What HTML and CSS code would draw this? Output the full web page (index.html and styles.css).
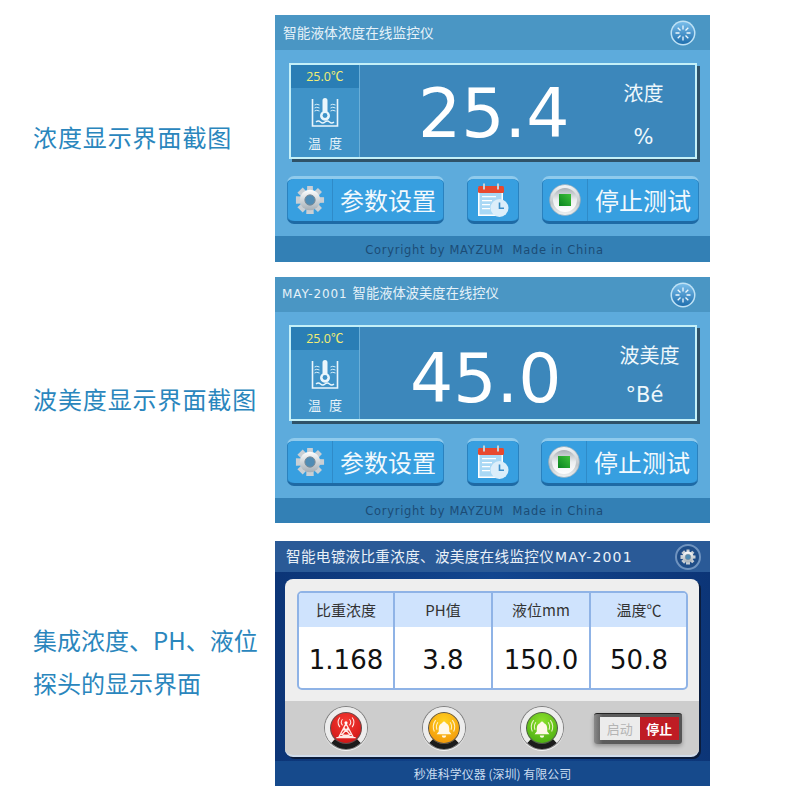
FILE: index.html
```html
<!DOCTYPE html>
<html lang="zh-CN">
<head>
  <meta charset="UTF-8" />
  <meta name="viewport" content="width=device-width, initial-scale=1.0"/>
  <title>显示界面截图</title>
  <link rel="stylesheet" href="styles.css">
</head>
<body>

  <!-- shared icons -->
  <svg class="defs" width="0" height="0" aria-hidden="true">
    <defs>
      <linearGradient id="gearFill" x1="0" y1="0" x2="0" y2="1">
        <stop offset="0" stop-color="#ffffff"/>
        <stop offset="1" stop-color="#a4aeb6"/>
      </linearGradient>
      <linearGradient id="chrome" x1="0" y1="0" x2="0" y2="1">
        <stop offset="0" stop-color="#f4f6f7"/>
        <stop offset="0.6" stop-color="#c2c7ca"/>
        <stop offset="1" stop-color="#f2f4f5"/>
      </linearGradient>
      <linearGradient id="chromeIn" x1="0" y1="0" x2="0" y2="1">
        <stop offset="0" stop-color="#a9b0b5"/>
        <stop offset="0.5" stop-color="#eceef0"/>
        <stop offset="1" stop-color="#ffffff"/>
      </linearGradient>
      <linearGradient id="stopGreen" x1="1" y1="0" x2="0" y2="1">
        <stop offset="0" stop-color="#3fc13a"/>
        <stop offset="1" stop-color="#0a8420"/>
      </linearGradient>
      <linearGradient id="knob" x1="0" y1="0" x2="0" y2="1">
        <stop offset="0" stop-color="#79bdea"/>
        <stop offset="1" stop-color="#1f6fae"/>
      </linearGradient>
    </defs>
    <symbol id="gear" viewBox="0 0 32 32">
      <g fill="#c9cfd4">
        <path d="M13 1h6l1 30h-8z"/>
        <path d="M13 1h6l1 30h-8z" transform="rotate(45 16 16)"/>
        <path d="M13 1h6l1 30h-8z" transform="rotate(90 16 16)"/>
        <path d="M13 1h6l1 30h-8z" transform="rotate(135 16 16)"/>
      </g>
      <circle cx="16" cy="16" r="11" fill="url(#gearFill)"/>
      <circle cx="16" cy="16" r="5.500" fill="#4f8cb5" stroke="#7d8a94" stroke-width="1"/>
    </symbol>
    <symbol id="calendar" viewBox="0 0 32 36">
      <rect x="1" y="5" width="25" height="29" fill="#ffffff"/>
      <rect x="2.500" y="11" width="22" height="21.500" fill="#a9d8f5"/>
      <rect x="1" y="4" width="26" height="7" rx="1.500" fill="#e8492f"/>
      <rect x="6" y="1.500" width="2" height="6" fill="#c9d2d8"/>
      <rect x="20" y="1.500" width="2" height="6" fill="#c9d2d8"/>
      <path d="M5 14h14v1.200H5zM5 18h10v1.200H5zM5 22h8v1.200H5zM5 26h8v1.200H5z" fill="#fff"/>
      <circle cx="22.500" cy="26" r="9" fill="#dceefa"/>
      <path d="M22.500 20.500v5.800h4.500" fill="none" stroke="#3f8fc9" stroke-width="1.600"/>
    </symbol>
    <symbol id="stopBtn" viewBox="0 0 32 32">
      <circle cx="16" cy="16" r="15.500" fill="url(#chrome)" stroke="#8fa3b0" stroke-width="0.600"/>
      <circle cx="16" cy="16" r="12" fill="url(#chromeIn)"/>
      <rect x="10" y="10" width="12" height="12" fill="url(#stopGreen)"/>
    </symbol>
    <symbol id="tank" viewBox="0 0 28 32">
      <path d="M1.500 2v27h25V2" fill="none" stroke="#eaf6fc" stroke-width="1.600"/>
      <path d="M11.500 3.500a2.500 2.500 0 0 1 5 0v11a5 5 0 1 1-5 0z" fill="#eaf6fc"/>
      <circle cx="14" cy="18.500" r="2.400" fill="#3f93c8"/>
      <path d="M3.500 8q2-1.500 5 0M3.500 11q2-1.500 5 0M3.500 14q2-1.500 5 0M19.500 8q2-1.500 5 0M19.500 11q2-1.500 5 0M19.500 14q2-1.500 5 0" fill="none" stroke="#d5edf9" stroke-width="1"/>
      <path d="M5 25q2.250-2 4.500 0t4.500 0t4.500 0t4.500 0" fill="none" stroke="#eaf6fc" stroke-width="1.300"/>
    </symbol>
    <symbol id="spinner" viewBox="0 0 26 26">
      <circle cx="13" cy="13" r="12.500" fill="#bfe2f5"/>
      <circle cx="13" cy="13" r="11" fill="url(#knob)"/>
      <path d="M13 5.500v4M13 16.500v4M5.500 13h4M16.500 13h4M7.700 7.700l2.800 2.800M15.500 15.500l2.800 2.800M18.300 7.700l-2.800 2.800M10.500 15.500l-2.800 2.800" stroke="#eef8fd" stroke-width="1.300"/>
    </symbol>
    <symbol id="bell" viewBox="0 0 32 32">
      <path d="M16 8.500a2 2 0 0 1 2 1.800c3 1 4 3.500 4 6.700v3l2.500 3h-17l2.500-3v-3c0-3.200 1-5.700 4-6.700a2 2 0 0 1 2-1.800zM13.500 24.500h5a2.500 2.500 0 0 1-5 0z" fill="#fff8e8"/>
      <path d="M8 18a9 9 0 0 1 1-8.500M5 20a13 13 0 0 1 1.500-13M24 18a9 9 0 0 0-1-8.500M27 20a13 13 0 0 0-1.500-13" fill="none" stroke="#fff8e8" stroke-width="1.200" opacity="0.850"/>
    </symbol>
    <symbol id="tower" viewBox="0 0 32 32">
      <path d="M16 11l-8 15h16zM5 27h22M12 18h8M10 23l12 3M22 23l-12 3M13 15l8 9M19 15l-8 9" fill="none" stroke="#ffe9e6" stroke-width="1.500"/>
      <circle cx="16" cy="10" r="1.800" fill="#fff"/>
      <path d="M12 13a5.500 5.500 0 0 1 0-7M9 15a9 9 0 0 1 0-11M20 13a5.500 5.500 0 0 0 0-7M23 15a9 9 0 0 0 0-11" fill="none" stroke="#ffe9e6" stroke-width="1.200"/>
    </symbol>
  </svg>

  <main class="sheet">

    <section class="row">
      <h2 class="caption">浓度显示界面截图</h2>
      <div class="screen screen-a">
        <header class="top-bar">
          <span class="title">智能液体浓度在线监控仪</span>
          <svg class="top-icon"><use href="#spinner"/></svg>
        </header>
        <div class="panel">
          <div class="temp">
            <div class="temp-value">25.0℃</div>
            <svg class="tank-icon"><use href="#tank"/></svg>
            <div class="temp-name">温 度</div>
          </div>
          <div class="reading reading-a">
            <span class="value">25.4</span>
            <div class="unit">
              <span class="unit-name">浓度</span>
              <span class="unit-sign">%</span>
            </div>
          </div>
        </div>
        <div class="controls">
          <div class="btn btn-wide">
            <span class="btn-icon"><svg class="gear-icon"><use href="#gear"/></svg></span>
            <span class="btn-text">参数设置</span>
          </div>
          <div class="btn btn-small"><svg class="cal-icon"><use href="#calendar"/></svg></div>
          <div class="btn btn-wide">
            <span class="btn-icon"><svg class="stop-icon"><use href="#stopBtn"/></svg></span>
            <span class="btn-text">停止测试</span>
          </div>
        </div>
        <footer class="bottom-bar">Coryright by MAYZUM&nbsp; Made in China</footer>
      </div>
    </section>

    <section class="row row-second">
      <h2 class="caption">波美度显示界面截图</h2>
      <div class="screen screen-b">
        <header class="top-bar">
          <span class="title title-b"><span class="model">MAY-2001</span> 智能液体波美度在线控仪</span>
          <svg class="top-icon"><use href="#spinner"/></svg>
        </header>
        <div class="panel">
          <div class="temp">
            <div class="temp-value">25.0℃</div>
            <svg class="tank-icon"><use href="#tank"/></svg>
            <div class="temp-name">温 度</div>
          </div>
          <div class="reading reading-b">
            <span class="value">45.0</span>
            <div class="unit">
              <span class="unit-name">波美度</span>
              <span class="unit-sign unit-sign-b">°Bé</span>
            </div>
          </div>
        </div>
        <div class="controls controls-b">
          <div class="btn btn-wide">
            <span class="btn-icon"><svg class="gear-icon"><use href="#gear"/></svg></span>
            <span class="btn-text">参数设置</span>
          </div>
          <div class="btn btn-small"><svg class="cal-icon"><use href="#calendar"/></svg></div>
          <div class="btn btn-wide">
            <span class="btn-icon"><svg class="stop-icon"><use href="#stopBtn"/></svg></span>
            <span class="btn-text">停止测试</span>
          </div>
        </div>
        <footer class="bottom-bar">Coryright by MAYZUM&nbsp; Made in China</footer>
      </div>
    </section>

    <section class="row row-third">
      <h2 class="caption caption-two">集成浓度、PH、液位<br>探头的显示界面</h2>
      <div class="screen screen-c">
        <header class="navy-bar">
          <span class="navy-title">智能电镀液比重浓度、波美度在线监控仪<span class="navy-model">MAY-2001</span></span>
          <span class="navy-icon"><svg class="navy-gear"><use href="#gear"/></svg></span>
        </header>
        <div class="card">
          <div class="card-top">
            <div class="data-table">
              <div class="col"><div class="col-head">比重浓度</div><div class="col-value">1.168</div></div>
              <div class="col"><div class="col-head">PH值</div><div class="col-value">3.8</div></div>
              <div class="col"><div class="col-head">液位mm</div><div class="col-value">150.0</div></div>
              <div class="col"><div class="col-head">温度℃</div><div class="col-value">50.8</div></div>
            </div>
          </div>
          <div class="card-bottom">
            <span class="lamp lamp-red"><svg class="lamp-icon"><use href="#tower"/></svg></span>
            <span class="lamp lamp-amber"><svg class="lamp-icon"><use href="#bell"/></svg></span>
            <span class="lamp lamp-green"><svg class="lamp-icon"><use href="#bell"/></svg></span>
            <div class="switch">
              <span class="switch-off">启动</span>
              <span class="switch-on">停止</span>
            </div>
          </div>
        </div>
        <footer class="navy-foot">秒准科学仪器 (深圳) 有限公司</footer>
      </div>
    </section>

  </main>

</body>
</html>
```

FILE: styles.css
```css
* { margin: 0; padding: 0; box-sizing: border-box; }

body {
  background: #fff;
  font-family: "Noto Sans CJK SC", "Noto Sans", sans-serif;
}

.defs {
  display: block;
  height: 0;
}

.sheet {
  padding-top: 15px;
}

.row {
  display: flex;
  align-items: center;
}

.row-second { margin-top: 15px; }
.row-third { margin-top: 18px; }

.caption {
  width: 275px;
  padding: 0 0 4px 33px;
  font-size: 24px;
  font-weight: 400;
  letter-spacing: 0.9px;
  line-height: 43px;
  color: #2a86bd;
}

.caption-two { padding-bottom: 6px; letter-spacing: 0; }

/* light blue screens */
.screen {
  width: 435px;
  display: flex;
  flex-direction: column;
  background: #5dabdc;
}

.screen-a { height: 247px; }
.screen-b { height: 246px; }
.screen-c { height: 245px; background: linear-gradient(90deg, #0c3577, #12468f 50%, #0c3577); }

.top-bar {
  height: 35px;
  flex-shrink: 0;
  display: flex;
  align-items: center;
  justify-content: space-between;
  padding: 0 14px 0 8px;
  background: #4a96c4;
  color: #e6f2f9;
}

.title {
  margin-top: -2px;
  font-size: 13.7px;
  line-height: 20px;
}

.title-b { margin-left: -1px; font-size: 13.3px; }

.model {
  margin-right: 2px;
  font-family: "DejaVu Sans", sans-serif;
  font-size: 12px;
  letter-spacing: 0.9px;
}

.top-icon {
  width: 26px;
  height: 26px;
}

.panel {
  height: 96px;
  margin: 13px 13px 0 14px;
  display: flex;
  background: #3c87bb;
  border: 2px solid #c4f0f8;
  box-shadow: 3px 3px 0 #2f5268;
}

.temp {
  width: 69px;
  flex-shrink: 0;
  display: flex;
  flex-direction: column;
  align-items: center;
  background: #3f93c8;
  border-right: 1px solid #6aafd8;
}

.temp-value {
  width: 100%;
  height: 23px;
  background: #2a7eb5;
  text-align: center;
  font-family: "Open Sans", sans-serif;
  font-size: 12.5px;
  line-height: 23px;
  color: #f3ee73;
}

.tank-icon {
  width: 28px;
  height: 32px;
  margin-top: 9px;
}

.temp-name {
  margin-top: 5px;
  font-size: 13px;
  line-height: 18px;
  word-spacing: 5px;
  color: #e8f4fa;
}

.reading {
  flex: 1;
  display: flex;
  align-items: center;
  padding-top: 6px;
}

.reading-a { padding-left: 58px; gap: 44px; }
.reading-b { padding-left: 50px; gap: 58px; }

.value {
  font-family: "DejaVu Sans", sans-serif;
  font-size: 68px;
  line-height: 80px;
  color: #fff;
}

.reading-b .value { margin-top: 6px; }

.unit {
  width: 60px;
  margin-top: 2px;
  display: flex;
  flex-direction: column;
  align-items: center;
  gap: 14px;
  color: #eef7fb;
}

.reading-b .unit { margin-top: -2px; gap: 10px; }

.unit-name {
  font-size: 20px;
  line-height: 30px;
  white-space: nowrap;
}

.unit-sign {
  font-family: "DejaVu Sans", sans-serif;
  font-size: 21px;
  line-height: 30px;
  white-space: nowrap;
}

.unit-sign-b { margin-right: 10px; }

.controls {
  margin-top: 17px;
  padding: 0 11px 0 12px;
  display: flex;
  justify-content: space-between;
}

.controls-b { padding-right: 12px; }

.btn {
  height: 48px;
  display: flex;
  align-items: center;
  background: #379fe0;
  border-radius: 7px;
  border-top: 3px solid #8fcaec;
  border-bottom: 3px solid #1e6aa5;
  box-shadow: inset 1px 0 0 #2a82bf, inset -1px 0 0 #2a82bf;
}

.btn-wide { width: 157px; }

.btn-small {
  width: 52px;
  justify-content: center;
}

.btn-icon {
  width: 46px;
  height: 100%;
  display: flex;
  align-items: center;
  justify-content: center;
  border-right: 1px solid #2f8bc8;
}

.gear-icon {
  width: 30px;
  height: 30px;
}

.stop-icon {
  width: 32px;
  height: 32px;
}

.cal-icon {
  width: 32px;
  height: 36px;
}

.btn-text {
  margin-left: 7px;
  font-size: 24px;
  line-height: 34px;
  color: #f2f9fd;
}

.bottom-bar {
  flex: 1;
  margin-top: 12px;
  padding: 1px 16px 0 0;
  display: flex;
  align-items: center;
  justify-content: center;
  background: #3380b5;
  font-family: "DejaVu Sans", sans-serif;
  font-size: 11.5px;
  letter-spacing: 0.7px;
  color: #1c4c75;
}

/* navy screen */
.navy-bar {
  height: 31px;
  flex-shrink: 0;
  display: flex;
  align-items: center;
  justify-content: space-between;
  padding: 0 9px 0 11px;
  background: #2a5a97;
  color: #e9f0f7;
}

.navy-title {
  font-size: 14.6px;
  letter-spacing: 0.3px;
  line-height: 20px;
}

.navy-model {
  margin-left: 1px;
  font-family: "DejaVu Sans", sans-serif;
  font-size: 14px;
  letter-spacing: 1.2px;
}

.navy-icon {
  width: 26px;
  height: 26px;
  display: flex;
  align-items: center;
  justify-content: center;
  border-radius: 50%;
  background: #1f4d88;
  border: 2px solid #6f93bf;
}

.navy-gear {
  width: 16px;
  height: 16px;
}

.card {
  height: 178px;
  margin: 7px 11px 0 10px;
  display: flex;
  flex-direction: column;
  overflow: hidden;
  border-radius: 8px;
  background: #eeeeee;
  border-bottom: 2px solid #cfdcec;
  box-shadow: 2px 2px 0 #0a1c3c;
}

.card-top {
  height: 122px;
  padding: 12px 11px 11px 12px;
}

.data-table {
  height: 99px;
  display: grid;
  grid-template-columns: 94px 98px 98px 98px;
  overflow: hidden;
  border: 2px solid #8fb3e6;
  border-radius: 5px;
  background: #fff;
}

.col + .col { border-left: 2px solid #8fb3e6; }

.col-head {
  height: 34px;
  background: #cfe3fd;
  text-align: center;
  font-size: 15px;
  line-height: 34px;
  color: #333;
}

.col-value {
  height: 63px;
  text-align: center;
  font-family: "DejaVu Sans", sans-serif;
  font-size: 26px;
  line-height: 66px;
  color: #111;
}

.card-bottom {
  flex: 1;
  display: flex;
  align-items: center;
  padding: 0 17px 0 40px;
  gap: 56px;
  background: #cdcdcd;
}

.lamp {
  width: 42px;
  height: 42px;
  flex-shrink: 0;
  display: flex;
  align-items: center;
  justify-content: center;
  border-radius: 50%;
  border: 5px solid #ededed;
  border-bottom-color: #1c1c1c;
  box-shadow: 0 0 0 1px #808080, 0 1px 0 1px #f4f4f4, inset 0 0 0 1px #555;
}

.lamp-red { background: radial-gradient(circle at 50% 30%, #f53a32, #c90d10); }
.lamp-amber { background: radial-gradient(circle at 50% 30%, #ffd21f, #f08a05); }
.lamp-green { background: radial-gradient(circle at 50% 30%, #8be02b, #3ea30c); }

.lamp-icon {
  width: 28px;
  height: 28px;
  flex-shrink: 0;
}

.switch {
  width: 88px;
  height: 31px;
  flex-shrink: 0;
  margin-left: -25px;
  display: flex;
  padding: 3px 3px 4px 6px;
  border-radius: 3px;
  background: linear-gradient(90deg, #8a8a8a, #5c5c5c 10%, #555);
  border-top: 1px solid #222;
  box-shadow: 0 2px 4px rgba(0,0,0,0.3);
}

.switch-off, .switch-on {
  flex: 1;
  text-align: center;
  font-size: 13px;
  line-height: 23px;
}

.switch-off { background: #ececec; color: #b4b4b4; }
.switch-on { background: #bf1c24; color: #fff; font-weight: 700; }

.navy-foot {
  flex: 1;
  margin-top: 4px;
  display: flex;
  align-items: center;
  justify-content: center;
  background: #164a8c;
  font-size: 12px;
  color: #c9dcf0;
}
```
